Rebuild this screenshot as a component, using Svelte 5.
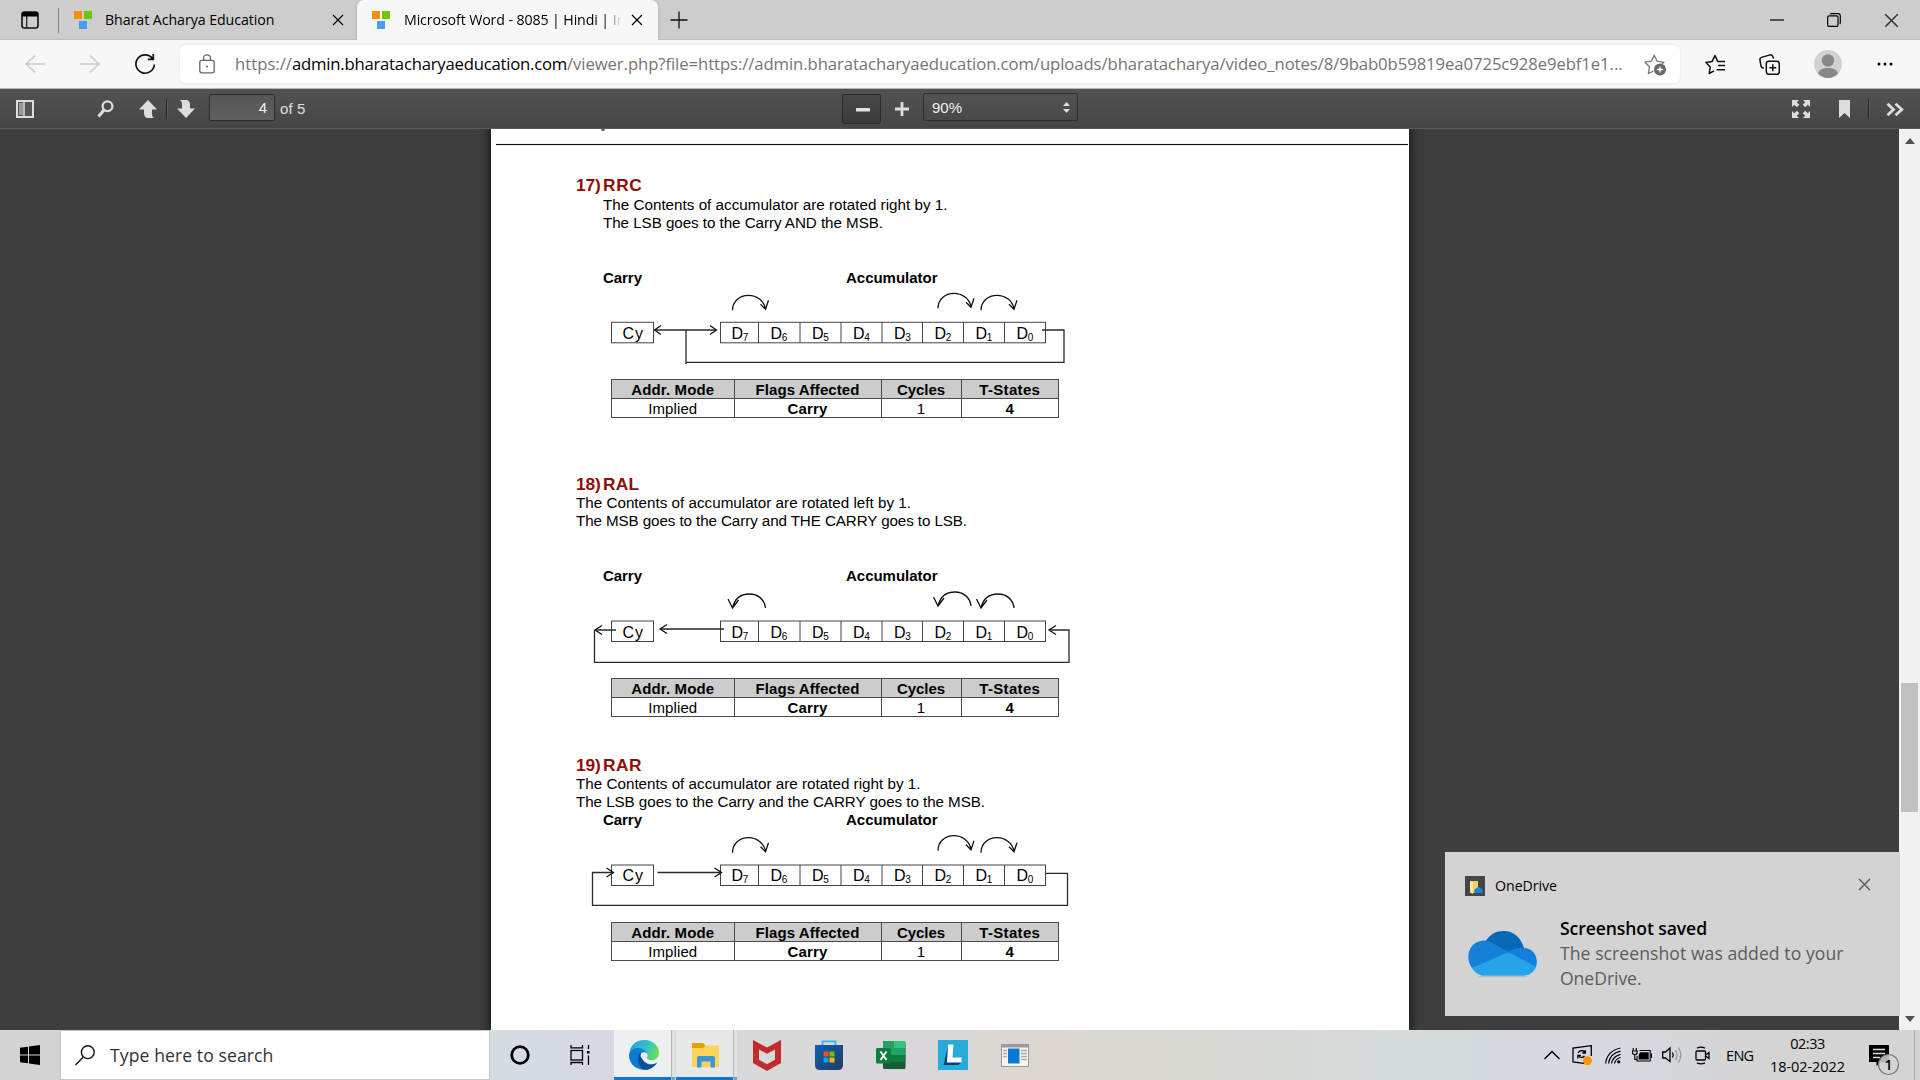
<script>
  // Spread the letters so that a label takes exactly the given width.
  function fit(node, width) {
    const n = [...node.textContent].length;
    const natural = node.getBoundingClientRect().width;
    node.style.letterSpacing = `${(width - natural) / n}px`;
  }

  const cellEdges = [720.5, 758.5, 800, 841, 882, 922.5, 963.5, 1004.5, 1045.5];
  const bits = [7, 6, 5, 4, 3, 2, 1, 0];

  const sections = [
    {
      id: 's17', num: '17)', name: 'RRC', nameW: 39.5,
      lines: [['The Contents of accumulator are rotated right by 1.', 344.5], ['The LSB goes to the Carry AND the MSB.', 280]],
      box: 53.3, base: 69.5, right: true, arc: 26.3,
      wires: 'M655 61H716M686 61V95M686 93.3H1064V61H1042',
      heads: 'M661 56.5L654.5 61L661 65.5M710 56.5L716.5 61L710 65.5'
    },
    {
      id: 's18', num: '18)', name: 'RAL', nameW: 36.5,
      lines: [['The Contents of accumulator are rotated left by 1.', 335], ['The MSB goes to the Carry and THE CARRY goes to LSB.', 391]],
      box: 54, base: 70.5, right: false, arc: 27,
      wires: 'M596 63H616M594.5 63V95.3H1069V63H1050M661 62H724',
      heads: 'M602 58.5L595 63L602 67.5M667 57.5L660 62L667 66.5M1056 58.5L1049 63L1056 67.5'
    },
    {
      id: 's19', num: '19)', name: 'RAR', nameW: 39,
      lines: [['The Contents of accumulator are rotated right by 1.', 344.5], ['The LSB goes to the Carry and the CARRY goes to the MSB.', 409]],
      box: 54, base: 69.8, right: true, arc: 26.7,
      wires: 'M613 61.5H592.5V94.3H1067.5V62.3H1046M657.5 61.5H721',
      heads: 'M606.5 57L613.5 61.5L606.5 66M714.5 57L721.5 61.5L714.5 66'
    }
  ];
  const arcs = [[732.5, 0], [938, -2], [981, 0]];
</script>

{#snippet favicon()}
  <svg class="fav" width="18" height="18" viewBox="0 0 18 18">
    <rect width="8" height="8" fill="#ff8c0a" /><rect x="10" width="8" height="8" fill="#6cc70a" /><rect x="5" y="10" width="8" height="8" fill="#4a9cf5" />
  </svg>
{/snippet}

{#snippet cross(size)}
  <svg width={size} height={size} viewBox="0 0 12 12"><path d="M1 1L11 11M11 1L1 11" stroke="currentColor" stroke-width="1.2" fill="none" /></svg>
{/snippet}

<div class="screen">
  <header class="tabs">
    <svg class="tabmenu" width="18" height="18" viewBox="0 0 18 18"><rect x="1" y="1" width="16" height="16" rx="2.5" fill="none" stroke="#111" stroke-width="1.6" /><path d="M1 2.5Q1 1 3 1H15Q17 1 17 2.5V5.5H1Z" fill="#000" /><path d="M5.7 5V17" stroke="#222" stroke-width="1.3" /></svg>
    <i class="split"></i>
    <div class="tab first">
      {@render favicon()}
      <span class="label"><span use:fit={169.5}>Bharat Acharya Education</span></span>
      <span class="x">{@render cross(12)}</span>
    </div>
    <div class="tab active">
      {@render favicon()}
      <span class="label fade"><span use:fit={205}>Microsoft Word - 8085 | Hindi |</span> In</span>
      <span class="x">{@render cross(12)}</span>
    </div>
    <svg class="plus" width="18" height="18" viewBox="0 0 18 18"><path d="M9 .5V17.5M.5 9H17.5" stroke="#111" stroke-width="1.3" /></svg>
    <div class="winbtns">
      <svg width="14" height="14" viewBox="0 0 14 14"><path d="M0 7H14" stroke="#000" stroke-width="1.2" /></svg>
      <svg width="14" height="14" viewBox="0 0 14 14" fill="none" stroke="#000" stroke-width="1.2"><rect x=".7" y="2.8" width="10.3" height="10.5" rx="1.4" /><path d="M3 1.2Q3.5.7 5 .7H11Q13.3.7 13.3 3V9.5Q13.3 10.6 12.7 11" /></svg>
      <span class="grey">{@render cross(15)}</span>
    </div>
  </header>

  <nav class="address">
    <svg class="back" width="20" height="20" viewBox="0 0 20 20" fill="none" stroke="#c9c9c9" stroke-width="1.4"><path d="M20 10H1M10 1.5L1 10L10 18.5" /></svg>
    <svg class="fwd" width="20" height="20" viewBox="0 0 20 20" fill="none" stroke="#c9c9c9" stroke-width="1.4"><path d="M0 10H19M10 1.5L19 10L10 18.5" /></svg>
    <svg class="reload" width="22" height="22" viewBox="0 0 22 22" fill="none" stroke="#111" stroke-width="1.7"><path d="M18.500 5.500A9.200 9.200 0 1 0 20.300 11.500M19.300 1V6.300H13.800" /></svg>
    <div class="urlbox">
      <svg class="lock" width="16" height="20" viewBox="0 0 16 20" fill="none" stroke="#666" stroke-width="1.3"><rect x=".8" y="6.3" width="14.4" height="12.5" rx="2" /><path d="M4.600 6V4Q4.600 .8 8 .8Q11.400 .8 11.400 4V6" /><circle cx="8" cy="12.5" r="1" fill="#666" stroke="none" /></svg>
      <span class="url"><span use:fit={57}>https://</span><b use:fit={275}>admin.bharatacharyaeducation.com</b><span use:fit={1055.5}>/viewer.php?file=https://admin.bharatacharyaeducation.com/uploads/bharatacharya/video_notes/8/9bab0b59819ea0725c928e9ebf1e1...</span></span>
      <svg class="star" width="23" height="23" viewBox="0 0 23 23" fill="none" stroke="#767676" stroke-width="1.3" stroke-linejoin="round"><path d="M9.500 18L4.400 20.500L5.400 13.800L1 9.200L7.300 8.200L10.200 2.200L13.100 8.200L20 9.300L18 11" /><circle cx="16" cy="16.5" r="6" fill="#666" stroke="none" /><path d="M16 13.500V19.500M13 16.500H19" stroke="#fff" /></svg>
    </div>
    <svg class="favs" width="21" height="21" viewBox="0 0 21 21" fill="none" stroke="#111" stroke-width="1.5" stroke-linejoin="round"><path d="M9 16.800L4.200 19.500L5.200 13L1 8.600L7 7.600L10 1.500L12.800 7.600H20M13 11.600H20M11.500 15.800H20" /></svg>
    <svg class="coll" width="21" height="21" viewBox="0 0 21 21" fill="none" stroke="#111" stroke-width="1.5"><rect x="7.3" y="7.3" width="13" height="13" rx="2.5" /><path d="M13.800 10.300V17.300M10.300 13.800H17.300M4.800 14.200L3.500 13.800Q2.300 13.300 2 12L.9 6Q.7 4 2.500 3.400L11 .9Q13 .5 13.600 2L14.600 4.500" /></svg>
    <svg class="avatar" width="28" height="28" viewBox="0 0 28 28"><circle cx="14" cy="14" r="14" fill="#d2d0ce" /><circle cx="14" cy="10.5" r="6.2" fill="#8a8886" /><path d="M4 23.800C5 19.500 9 18 14 18S23 19.500 24 23.800A14 14 0 0 1 4 23.800Z" fill="#8a8886" /></svg>
    <svg class="dots" width="16" height="4" viewBox="0 0 16 4"><circle cx="2" cy="2" r="1.5" /><circle cx="8" cy="2" r="1.5" /><circle cx="14" cy="2" r="1.5" /></svg>
  </nav>

  <div class="pdfbar">
    <svg class="side" width="18" height="18" viewBox="0 0 18 18"><rect x="1" y="1" width="16" height="16" fill="#555" stroke="#ddd" stroke-width="2" /><rect x="3" y="3" width="4" height="12" fill="#999" /><path d="M8 2V16" stroke="#ddd" stroke-width="1.5" /></svg>
    <svg class="find" width="17" height="18" viewBox="0 0 17 18" fill="none" stroke="#ddd"><circle cx="10.5" cy="6.2" r="4.9" stroke-width="2.2" /><path d="M7 10L1.500 16.500" stroke-width="3.2" /></svg>
    <svg class="up" width="18" height="18" viewBox="0 0 18 18"><path d="M9 0L18 9.500H13V14Q13 17 15 18H8Q5 17 5 13V9.500H0Z" fill="#ddd" /></svg>
    <i class="bar"></i>
    <svg class="down" width="18" height="18" viewBox="0 0 18 18"><path d="M9 18L0 8.500H5V4Q5 1 3 0H10Q13 1 13 5V8.500H18Z" fill="#ddd" /></svg>
    <div class="pageno">4</div>
    <span class="of"><span use:fit={25.5}>of 5</span></span>
    <div class="zoomout"><svg width="14" height="4" viewBox="0 0 14 4"><rect width="14" height="3.5" rx=".5" fill="#e2e2e2" /></svg></div>
    <svg class="zoomin" width="14" height="14" viewBox="0 0 14 14"><path d="M7 0V14M0 7H14" stroke="#ddd" stroke-width="2.8" /></svg>
    <div class="zoom"><span use:fit={30}>90%</span><svg width="7" height="11" viewBox="0 0 7 11" fill="#ddd"><path d="M3.500 0L7 4H0ZM3.500 11L7 7H0Z" /></svg></div>
    <div class="right">
      <svg width="18" height="18" viewBox="0 0 18 18" fill="#ddd"><path d="M0 0H7L4.800 2.200L7.300 4.800L4.800 7.300L2.200 4.800L0 7ZM18 0V7L15.800 4.800L13.200 7.300L10.700 4.800L13.200 2.200L11 0ZM0 18V11L2.200 13.200L4.800 10.700L7.300 13.200L4.800 15.800L7 18ZM18 18H11L13.200 15.800L10.700 13.200L13.200 10.700L15.800 13.200L18 11Z" /></svg>
      <svg class="mark" width="11" height="18" viewBox="0 0 11 18"><path d="M0 0H11V18L5.500 13L0 18Z" fill="#ddd" /></svg>
      <i class="bar"></i>
      <svg class="more" width="18" height="13" viewBox="0 0 18 13" fill="none" stroke="#ddd" stroke-width="2.8"><path d="M1.500 .8L7.500 6.500L1.500 12.200M9.500 .8L15.800 6.500L9.500 12.200" /></svg>
    </div>
  </div>

  <main class="viewer">
    <article class="page">
      <div class="above"></div>
      <div class="rule"></div>
      {#each sections as s (s.id)}
        <section class={s.id}>
          <h2><span use:fit={24.5}>{s.num}</span><span class="nm" use:fit={s.nameW}>{s.name}</span></h2>
          {#each s.lines as [text, w]}
            <p><span use:fit={w}>{text}</span></p>
          {/each}
          <svg class="fig" width="918" height="111" viewBox="491 0 918 111">
            <g class="bold"><text x="603" y="14" textLength="39">Carry</text><text x="846" y="14" textLength="91.5">Accumulator</text></g>
            <g class="line">
              <rect x="611.5" y={s.box} width="42" height="20.5" />
              <rect x="720.5" y={s.box} width="325" height="20.5" />
              {#each cellEdges.slice(1, 8) as x}<path d="M{x} {s.box}v20.5" />{/each}
            </g>
            <text class="reg" x="622.5" y={s.base} textLength="20.5">Cy</text>
            {#each bits as b, i}
              {@const x = i ? cellEdges[i] + 12 : 731.5}
              <text class="reg" {x} y={s.base}>D</text>
              <text class="sub" x={x + 11.2} y={s.base + 2}>{b}</text>
            {/each}
            <path class="wire" d={s.wires} />
            <path class="head" d={s.heads} />
            {#each arcs as [x, dy]}
              <path class="head" d={s.right
                ? `M${x} ${s.arc + dy + 15}c0-9 7-15 16-15c8 0 15 5 17 13m-5-4l5 5l3-9`
                : `M${x + 33} ${s.arc + dy + 14}c-1-9-8-14-16-14c-9 0-15 5-17 14m-4.500-9l4.500 9l6-8`} />
            {/each}
          </svg>
          <table>
            <tbody>
              <tr><th class="c1"><span use:fit={83}>Addr. Mode</span></th><th class="c2"><span use:fit={104}>Flags Affected</span></th><th class="c3"><span use:fit={48}>Cycles</span></th><th><span use:fit={61}>T-States</span></th></tr>
              <tr><td><span use:fit={49}>Implied</span></td><td><b use:fit={40}>Carry</b></td><td>1</td><td><b>4</b></td></tr>
            </tbody>
          </table>
        </section>
      {/each}
    </article>
    <div class="scroll">
      <svg width="10" height="6" viewBox="0 0 10 6"><path d="M0 6L5 0L10 6Z" fill="#505050" /></svg>
      <div class="thumb"></div>
      <svg class="dn" width="10" height="6" viewBox="0 0 10 6"><path d="M0 0H10L5 6Z" fill="#505050" /></svg>
    </div>
    <aside class="toast">
      <div class="thead">
        <svg width="20" height="20" viewBox="0 0 20 20"><rect width="20" height="20" fill="#454545" /><path d="M5 5H13V17H8L5 16Z" fill="#f7cf66" /><path d="M5 5L8 6.500V18L5 16.500Z" fill="#ffe9a6" /><path d="M10 17A2.300 2.300 0 0 1 10.500 13A3.200 3.200 0 0 1 16 12.800A2.200 2.200 0 0 1 16.500 17Z" fill="#1487dc" /></svg>
        <span class="tapp"><span use:fit={62}>OneDrive</span></span>
        <span class="tx">{@render cross(13)}</span>
      </div>
      <div class="tbody">
        <svg class="cloud" width="69" height="47" viewBox="0 0 69 47">
          <path d="M14 44.500H56L60 45.500H10Z" fill="#9b9b9b" />
          <path d="M17 11C22 3 28 0 36 0C46 0 53 7 56 17L41 24Z" fill="#0768b8" />
          <path d="M4 37C-3 28 0 12 13 10C19 8.500 23 11 28 14L41 21L32 30Z" fill="#1480d8" />
          <path d="M40.500 21C45 18 50 16 56 17C66 17 71 27 68 36L52 34Z" fill="#1280dc" />
          <path d="M4 37L40.500 21L68 36C66 41 61 44.500 56 44.500H16C11 44.500 7 42 4 37Z" fill="#27a3ea" />
        </svg>
        <div class="tmsg">
          <p class="th"><span use:fit={147}>Screenshot saved</span></p>
          <p><span use:fit={283.5}>The screenshot was added to your</span></p>
          <p><span use:fit={81.5}>OneDrive.</span></p>
        </div>
      </div>
    </aside>
  </main>

  <footer class="taskbar">
    <div class="start"><svg width="20" height="20" viewBox="0 0 20 20"><path d="M0 2.800L8 1.700V9.500H0ZM9 1.500L20 0V9.500H9ZM0 10.500H8V18.300L0 17.200ZM9 10.500H20V20L9 18.500Z" /></svg></div>
    <div class="search">
      <svg width="20" height="21" viewBox="0 0 20 21" fill="none" stroke="#111" stroke-width="1.4"><circle cx="12.8" cy="7.2" r="6.4" /><path d="M8.300 11.900L.5 20" /></svg>
      <span use:fit={163.5}>Type here to search</span>
    </div>
    <div class="slot"><svg width="20" height="20" viewBox="0 0 20 20"><circle cx="10" cy="10" r="8.3" fill="none" stroke="#000" stroke-width="2.8" /></svg></div>
    <div class="slot tv"><svg width="20" height="20" viewBox="0 0 20 20" fill="none" stroke="#000" stroke-width="1.3"><rect x="1" y="5.5" width="11.5" height="9.5" /><path d="M1 0V2.800H12.500V0M1 20V17.500H12.500V20M18.500 0V4M18.500 10.500V20" /><rect x="17" y="6" width="2.5" height="2.5" fill="#000" stroke="none" /></svg></div>
    <div class="slot on">
      <svg width="30" height="30" viewBox="0 0 30 30">
        <defs><linearGradient id="eg" x1="0" x2="1" y1=".3" y2=".6"><stop offset="0" stop-color="#1ea5e0" /><stop offset=".55" stop-color="#35c1c8" /><stop offset="1" stop-color="#6de04c" /></linearGradient></defs>
        <path d="M.5 12C2 4 8 0 15.500 0C24 0 30 6 30 12.500C30 18 26 20.500 22 20.500C19 20.500 17.500 19.500 18 18C19.500 14 16 9 10 8.500C5 8 2 10 .5 12Z" fill="url(#eg)" />
        <path d="M0 15C.5 10 5 7.500 9.500 8C15 8.500 18 12 18 15C13 11 9 16 11 21C13 26 19 28 24 26C20 30 14 31 9 28.500C3 26 0 21 0 15Z" fill="#0b7bd4" />
        <path d="M11 13C8 17 8 25 14 29.500C20 31 26 27 28 22.500C25 24.500 21 25 18 23.500C14 21 13 19 12.500 16Z" fill="#0d4f97" />
        <circle cx="15" cy="15.5" r="3.3" fill="#edeff1" />
        <path d="M15 17.500C15 20 20 22.500 27 21.500L28.500 20.500C26 21 19.500 20.500 17.500 18Z" fill="#edeff1" />
      </svg><i></i>
    </div>
    <div class="slot on second">
      <svg width="28" height="25" viewBox="0 0 28 25"><path d="M0 1Q0 0 1 0H11L13 2V7H0Z" fill="#e0a008" /><path d="M0 5H11L13.500 2.500H27V24H0Z" fill="#ffd35c" /><path d="M5 24.500V15Q5 13 7 13H21Q23 13 23 15V24.500H18.500V18.500H9.500V24.500Z" fill="#3b95d9" /></svg><i></i>
    </div>
    <div class="slot app"><svg width="28" height="31" viewBox="0 0 28 31"><path d="M0 0L14 7.500L28 0V23L14 31L0 23ZM6 9.500V19.800L14 24.200L22 19.800V9.500L14 13.700Z" fill="#c02b2e" fill-rule="evenodd" /></svg></div>
    <div class="slot app"><svg width="30" height="30" viewBox="0 0 30 30"><defs><linearGradient id="sg" x1="0" x2="1" y1="0" y2="1"><stop offset="0" stop-color="#0b62b4" /><stop offset="1" stop-color="#243a63" /></linearGradient></defs><path d="M8.500 5V1.300H21.500V5" fill="none" stroke="#2bb9f0" stroke-width="1.8" /><path d="M1 5H29V25Q29 30 24 30H6Q1 30 1 25Z" fill="url(#sg)" /><path d="M9.500 11.500H14.500V16.500H9.500Z" fill="#f25022" /><path d="M15.500 11.500H20.500V16.500H15.500Z" fill="#7fba00" /><path d="M9.500 17.500H14.500V22.500H9.500Z" fill="#00a4ef" /><path d="M15.500 17.500H20.500V22.500H15.500Z" fill="#ffb900" /></svg></div>
    <div class="slot app"><svg width="30" height="29" viewBox="0 0 30 29"><rect x="7" y="0" width="22.5" height="28" rx="1.5" fill="#185c37" /><path d="M7 0H18V14H7Z" fill="#21a366" /><path d="M18 0H28Q29.500 0 29.500 1.500V7H18Z" fill="#33c481" /><path d="M18 7H29.500V14H18Z" fill="#21a366" /><path d="M7 14H18V21H7Z" fill="#107c41" /><rect x="18" y="14" width="11.5" height="7" fill="#107c41" /><rect x="0" y="7" width="15" height="15.5" rx="1.5" fill="#107c41" /><path d="M4.500 10.500L10.500 19M10.500 10.500L4.500 19" stroke="#fff" stroke-width="1.9" /></svg></div>
    <div class="slot app"><svg width="30" height="30" viewBox="0 0 30 30"><rect width="30" height="30" fill="#27abd9" /><path d="M10 6L5.500 25H20L24 22H11Z" fill="#06437a" /><path d="M10 4.500H15.500L14.500 17.500H23.500V22.500H9Z" fill="#fff" /></svg></div>
    <div class="slot app"><svg width="28" height="23" viewBox="0 0 28 23"><rect x=".5" y=".5" width="27" height="22" fill="#f4f4f4" stroke="#999" /><path d="M0 0H28V3.500H0Z" fill="#999" /><rect x="7" y="4.5" width="11.5" height="15" fill="#0a78d6" /><path d="M2 6.500H6M2 9.500H6M2 12.500H6M20 6.500H26M20 9.500H26M20 12.500H26M20 15.500H26" stroke="#aaa" stroke-width="1.3" /></svg></div>

    <div class="tray">
      <svg class="chev" width="16" height="10" viewBox="0 0 16 10"><path d="M.5 9L8 1.500L15.500 9" fill="none" stroke="#000" stroke-width="1.4" /></svg>
      <svg class="upd" width="20" height="20" viewBox="0 0 20 20" fill="none" stroke="#000" stroke-width="1.3"><path d="M12 18.300L1 17V3L19.300 .7V11M6 7.800Q7.500 5.500 10 5.500Q12 5.600 12.800 7.500M13.300 5V8H10.300M12.500 10.800Q11.500 12.500 9.500 12.500Q7.500 12.400 6.500 10.500M5.800 13.500V10.300H8.800" /><circle cx="15.5" cy="15.7" r="4.5" fill="#ff9500" stroke="none" /></svg>
      <svg class="wifi" width="16" height="17" viewBox="0 0 16 17" fill="none" stroke="#000" stroke-width="1.2"><path d="M9.500 16.500Q10.300 12 15.500 10.500M6.500 16.500Q7.500 9.300 15.500 7.300M3.500 16.500Q4.800 6.500 15.500 4.100M.6 16.500Q2 4 15.500 1" /><circle cx="13.8" cy="14.8" r="1.6" fill="#000" stroke="none" /></svg>
      <svg class="bat" width="20" height="14" viewBox="0 0 20 14"><path d="M1.200 0V2.500M4.300 0V2.500M.4 3H5.200V4.500Q5.200 6.500 2.800 6.500Q.4 6.500 .4 4.500ZM2.800 6.500V11.500H5" fill="none" stroke="#000" stroke-width="1.1" /><path d="M7.500 2.500H18.200V13H5V8" fill="none" stroke="#000" stroke-width="1.1" /><path d="M8 4.200H16.700V11.400H6.600V7.500Z" fill="#000" /><path d="M19.400 5.500V10" stroke="#000" stroke-width="1.2" /></svg>
      <svg class="vol" width="21" height="18" viewBox="0 0 21 18" fill="none" stroke="#000" stroke-width="1.3"><path d="M.7 6H3.500L8 2V15.500L3.500 12H.7ZM10.500 6.500Q12 9 10.500 11.500" /><path d="M13.500 4Q16.500 9 13.500 14M16.500 1.500Q21 9 16.500 16.500" stroke="#999" /></svg>
      <svg class="cam" width="15" height="19" viewBox="0 0 15 19" fill="none" stroke="#000" stroke-width="1.3"><rect x="1" y="5" width="9.5" height="9" rx="1" /><path d="M10.500 9L14 6.500V12.500L10.500 10M2 2.200Q6 .2 10 2.200M2 16.800Q6 18.800 10 16.800" /></svg>
      <span class="eng"><span use:fit={27.5}>ENG</span></span>
      <div class="clock"><span use:fit={34.5}>02:33</span><span use:fit={75}>18-02-2022</span></div>
      <svg class="notif" width="32" height="34" viewBox="0 0 32 34"><path d="M0 0H20V17H12L7.500 21V17H0Z" /><path d="M4 4.500H16M4 8.500H16M4 12.500H11" stroke="#ddd" stroke-width="1.3" /><circle cx="19.5" cy="19.5" r="10" fill="#d3d3d3" fill-opacity=".85" stroke="#777" stroke-width="1.2" /><text x="15.500" y="24.5" class="n">1</text></svg>
      <i class="peek"></i>
    </div>
  </footer>
</div>

<style>
  :global(body) { margin: 0; overflow: hidden; }
  .screen { width: 1920px; height: 1080px; display: flex; flex-direction: column; overflow: hidden; font-family: "Open Sans", "Noto Sans", sans-serif; color: #000; }
  svg { display: block; flex: none; }
  p, h2 { margin: 0; }
  span { white-space: pre; }

  .tabs { height: 40px; background: #cdcdcd; display: flex; align-items: center; flex: none; box-shadow: inset 0 -1px #bdbdbd; }
  .tabmenu { margin-left: 21px; }
  .split { width: 1px; height: 25px; background: #888; margin-left: 19px; }
  .tab { display: flex; align-items: center; height: 40px; box-sizing: border-box; font-size: 14.2px; }
  .first { width: 298px; padding-left: 15px; }
  .active { width: 301px; padding-left: 15px; background: #f7f7f7; border-radius: 7px 7px 0 0; box-shadow: 0 0 3px #aaa; clip-path: inset(0 -3px 0 -3px); }
  .label { margin-left: 13px; width: 217px; overflow: hidden; line-height: 22px; }
  .active .label { margin-left: 14px; }
  .fade { mask-image: linear-gradient(90deg, #000 92%, transparent 100%); }
  .x { margin-left: 10px; }
  .plus { margin-left: 12px; }
  .winbtns { margin-left: auto; margin-right: 21px; display: flex; gap: 43px; align-items: center; }
  .grey { color: #333; }

  .address { height: 48px; flex: none; background: #f7f7f7; display: flex; align-items: center; border-bottom: 1px solid #b8b8b8; }
  .back { margin-left: 25px; }
  .fwd { margin-left: 35px; }
  .reload { margin-left: 34px; }
  .urlbox { margin-left: 24px; width: 1500px; height: 38px; background: #fff; border-radius: 6px; box-shadow: 0 0 3px #e0e0e0; display: flex; align-items: center; }
  .lock { margin-left: 19px; }
  .url { margin-left: 20px; font-size: 16.7px; color: #757575; width: 1390px; white-space: nowrap; line-height: 24px; }
  .url b { font-weight: 400; color: #000; }
  .star { margin-left: 19px; }
  .favs { margin-left: 25px; }
  .coll { margin-left: 33px; }
  .avatar { margin-left: 34px; }
  .dots { margin-left: 35px; }

  .pdfbar { height: 40px; flex: none; background: linear-gradient(#525252, #454545); display: flex; align-items: center; box-shadow: inset 0 -1px #5a5a5a; font: 15px "Liberation Sans", Arial, sans-serif; color: #e0e0e0; position: relative; z-index: 2; }
  .side { margin-left: 16px; }
  .find { margin-left: 63px; }
  .up { margin-left: 25px; }
  .bar { width: 1px; height: 20px; background: #222; border-right: 1px solid #5c5c5c; }
  .up + .bar { margin-left: 9px; }
  .down { margin-left: 9px; }
  .pageno { margin-left: 14px; width: 66px; height: 27px; box-sizing: border-box; border: 1px solid #2c2c2c; border-radius: 2px; background: linear-gradient(#555, #606060); text-align: right; padding-right: 7px; line-height: 25px; margin-top: -3px; color: #f0f0f0; }
  .of { margin-left: 5px; width: 563px; margin-top: -2px; }
  .zoomout { width: 39px; height: 30px; box-sizing: border-box; border: 1px solid #2a2a2a; border-radius: 2px; background: linear-gradient(#484848, #3a3a3a); display: flex; align-items: center; justify-content: center; margin-left: -1px; padding-left: 2px; padding-top: 1px; }
  .zoomin { margin-left: 14px; }
  .zoom { margin-left: 14px; width: 155px; height: 28px; box-sizing: border-box; border: 1px solid #2c2c2c; border-radius: 2px; background: linear-gradient(#535353, #484848); display: flex; align-items: center; justify-content: space-between; padding: 0 7px 0 8px; margin-top: -4px; color: #f0f0f0; }
  .right { margin-left: auto; margin-right: 16px; display: flex; align-items: center; }
  .mark { margin-left: 29px; }
  .right .bar { margin-left: 18px; }
  .more { margin-left: 16px; }

  .viewer { height: 901px; flex: none; background: #3e3e3e; position: relative; display: flex; overflow: hidden; }
  .page { margin-left: 491px; width: 918px; background: #fff; box-shadow: 0 0 9px 3px rgba(0, 0, 0, .55); font: 15.2px/18px "Liberation Sans", Arial, sans-serif; display: flex; flex-direction: column; }
  .above { width: 4px; height: 2px; margin-left: 110px; background: #7a4a45; border-radius: 0 0 2px 2px; flex: none; }
  .rule { height: 1.5px; background: #111; margin: 12.5px 1px 0 5px; flex: none; box-shadow: 0 0 1px #555; }
  section { display: flex; flex-direction: column; padding-left: 85px; }
  h2 { font: bold 17.3px/20px "Liberation Sans", Arial, sans-serif; color: #8e0e04; display: flex; height: 20px; flex: none; }
  .nm { margin-left: 2.5px; }
  p { height: 18px; flex: none; }
  .s17 { margin-top: 30px; }
  .s17 h2 { height: 21px; }
  .s17 p { padding-left: 27px; }
  .s17 .fig { margin-top: 37px; margin-bottom: -1px; }
  .s18 { margin-top: 56px; }
  .s18 .fig { margin-top: 37px; }
  .s19 { margin-top: 38px; }
  .fig { margin-left: -85px; }
  .fig text { fill: #000; }
  .bold { font-weight: bold; font-size: 15px; }
  .reg { font-size: 16px; }
  .sub { font-size: 10px; }
  .line { fill: none; stroke: #444; stroke-width: 1; }
  .wire { fill: none; stroke: #2a2a2a; stroke-width: 1.3; }
  .head { fill: none; stroke: #111; stroke-width: 1.3; }
  table { margin-left: 35px; width: 448px; border-collapse: collapse; table-layout: fixed; line-height: 17px; }
  th, td { border: 1px solid #4a4a4a; padding: 0; height: 18px; text-align: center; font-size: 15px; }
  th { background: #ccc; }
  .c1 { width: 121.5px; }
  .c2 { width: 146px; }
  .c3 { width: 79px; }

  .scroll { margin-left: auto; width: 21px; background: #f1f1f1; display: flex; flex-direction: column; align-items: center; }
  .scroll > svg:first-child { margin-top: 9px; }
  .thumb { width: 17px; height: 129px; background: #c1c1c1; margin-top: 539px; }
  .dn { margin-top: 204px; }

  .toast { position: absolute; left: 1445px; top: 723px; width: 455px; height: 164px; background: #d3d3d3; }
  .thead { display: flex; align-items: center; padding: 24px 29px 0 20px; height: 20px; }
  .tapp { margin-left: 10px; font-size: 14.2px; line-height: 20px; }
  .tx { margin-left: auto; color: #555; margin-top: -3px; }
  .tbody { display: flex; padding: 20px 0 0 23px; }
  .cloud { margin-top: 15px; }
  .tmsg { margin-left: 23px; font-size: 17.6px; line-height: 25px; color: #5c5c5c; }
  .tmsg p { height: 25px; }
  .tmsg .th { color: #000; font-weight: 600; }

  .taskbar { height: 50px; flex: none; display: flex; background: linear-gradient(90deg, #d3d3d3 0, #d3d3d3 400px, #d4dce2 500px, #d7d9e4 590px, #d9d9d9 760px, #d9d7dc 900px, #dcd7d0 1020px, #dad9d2 1150px, #d6dbdc 1400px, #d6d9e0 1600px, #d4d4d4 1760px); }
  .start { width: 60px; display: flex; align-items: center; padding-left: 20px; box-sizing: border-box; }
  .search { width: 430px; height: 50px; box-sizing: border-box; background: #fff; border: 1px solid #c6c6c6; display: flex; align-items: center; font-size: 17.6px; color: #333; padding-left: 14px; }
  .search svg { margin-right: 15px; }
  .slot { width: 60px; height: 50px; display: flex; align-items: center; justify-content: center; position: relative; }
  .tv { width: 64px; padding-right: 4px; box-sizing: border-box; }
  .on { width: 57px; background: #edeff1; box-shadow: inset 0 -3px #0078d7; margin-right: 4px; }
  .on i { position: absolute; left: 57px; top: 0; width: 3px; height: 50px; background: #dfe1e3; border-left: 1px solid #b5b5b5; box-shadow: inset 0 -3px #5aa9e3; }
  .on svg { margin-left: 2px; }
  .second { margin-left: 1px; background: #e7e8e8; margin-right: 0; }
  .app { width: 62px; }
  .second + .app { margin-left: 3px; }
  .tray { margin-left: auto; display: flex; align-items: center; height: 50px; font-size: 14.5px; }
  .upd { margin-left: 12px; }
  .wifi { margin-left: 13px; }
  .bat { margin-left: 11px; }
  .vol { margin-left: 10px; }
  .cam { margin-left: 12px; }
  .eng { margin-left: 16px; width: 28px; }
  .clock { margin-left: 15px; width: 77px; display: flex; flex-direction: column; align-items: center; line-height: 23px; }
  .notif { margin-left: 23px; margin-top: 13px; }
  .n { font-size: 14px; font-weight: 600; }
  .peek { width: 5px; height: 50px; border-left: 1px solid #aaa; margin-left: 13px; }
</style>
